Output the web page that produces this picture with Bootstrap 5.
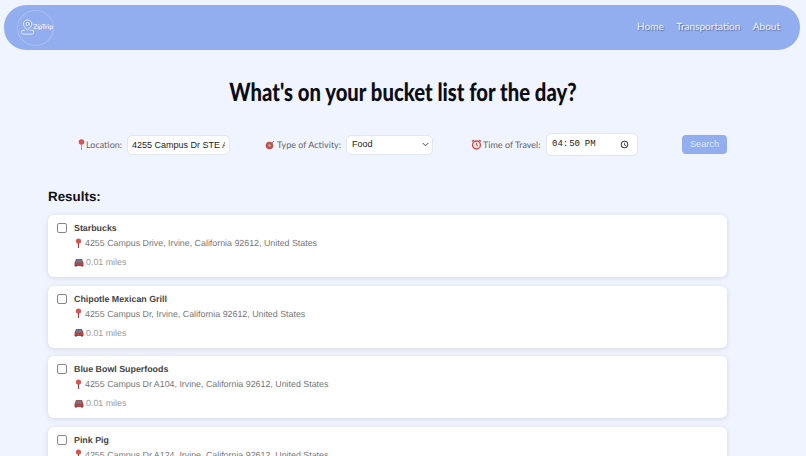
<!DOCTYPE html>
<html lang="en">
<head>
    <meta charset="UTF-8">
    <meta name="viewport" content="width=device-width,initial-scale=1">
    <title>ZipTrip</title>
    <link rel="stylesheet" href="https://cdn.jsdelivr.net/npm/bootstrap@5.3.3/dist/css/bootstrap.min.css">
    <style>
        html, body { height: 456px; overflow: hidden; }
        body { background: #f0f4ff; font-family: "Liberation Sans", Arial, sans-serif; text-rendering: geometricPrecision; }
        .hand { font-family: Lato, "Open Sans", sans-serif; }
        .top-bar { margin: 5px 6px 0 4px; height: 45px; background: #93aeee; border-radius: 22px; padding: 0 20px 0 13px; }
        .logo-ring { width: 37px; height: 36px; border-radius: 50%; border: 1px solid #a9bff2; padding-left: 3px; }
        .logo-name { font-size: 6.6px; font-weight: 700; color: #e6edfd; margin-left: -1px; }
        .top-links { gap: 12.5px; }
        .top-links a { color: #eef2fd; font-size: 10px; text-decoration: none; text-shadow: 1px 1px 1px #5a6f9e; }
        .page-title { font-size: 25px; font-weight: 900; color: #0c0c14; margin: 24px 0 0; line-height: 36px; transform: scaleX(.81); }
        .search-row { margin: 22.5px 79px 0 78px; height: 24px; }
        .search-group { gap: 5px; }
        .group-place { width: 151px; margin-right: 36px; }
        .group-kind { width: 168px; margin-right: 38px; }
        .group-time { width: 167px; margin-right: 44px; }
        .search-label { font-size: 9px; color: #666; white-space: nowrap; gap: 1px; }
        .field-box { height: 20px; min-height: 20px; border: 1px solid #e2e6ef; border-radius: 5px; background-color: #fff; font-size: 9px; color: #222; padding: 0 4px; box-shadow: none; }
        .field-place { width: 103px; flex: none; }
        .field-kind { width: 87px; flex: none; padding: 0 20px 0 5px; background-position: right 2px center; background-size: 9px 7px; }
        .field-time { width: 92px; flex: none; height: 23px; font-family: "Liberation Mono", monospace; padding: 0 5px; }
        .find-btn { width: 45px; height: 19px; background: #93aeee; border: 0; border-radius: 4px; color: #dfe7fb; font-size: 9.2px; padding: 0; }
        .results-wrap { margin: 31.5px 79px 0 48px; }
        .results-title { font-size: 13.4px; font-weight: 700; color: #111; margin: 0 0 10px; line-height: 17px; }
        .place-card { height: 62px; margin-bottom: 8.5px; background: #fff; border: 0; border-radius: 6px; box-shadow: 0 1px 5px rgba(60, 70, 100, .16); padding: 7px 10px 0 9px; }
        .place-tick { width: 10px; height: 10px; margin: 1px 7px 0 0; border: 1px solid #888; border-radius: 2px; flex: none; }
        .place-name { font-size: 8.85px; font-weight: 700; color: #444; line-height: 12px; }
        .place-addr { font-size: 8.85px; color: #777; margin-top: 3px; line-height: 12px; gap: 2px; }
        .place-dist { font-size: 8.85px; color: #999; margin-top: 7px; line-height: 12px; gap: 2px; }
    </style>
</head>
<body>
<nav class="top-bar d-flex align-items-center justify-content-between">
    <div class="logo-ring d-flex align-items-center">
        <svg width="14" height="17" viewBox="0 0 14 17" fill="none" stroke="#e6edfd" stroke-width="1">
            <path d="M7 11.500C4.500 8.500 2.500 7 2.500 4.800a4.500 4.300 0 0 1 9 0C11.500 7 9.500 8.500 7 11.500z"/>
            <circle cx="7" cy="4.800" r="1.600"/>
            <path d="M4 11.500H2.500a1.500 1.500 0 0 0 0 4h9a1.500 1.500 0 0 0 0-4H10"/>
        </svg>
        <span class="logo-name hand">ZipTrip</span>
    </div>
    <div class="top-links d-flex hand">
        <a href="#">Home</a>
        <a href="#">Transportation</a>
        <a href="#">About</a>
    </div>
</nav>

<h1 class="page-title text-center hand">What's on your bucket list for the day?</h1>

<form class="search-row d-flex align-items-center">
    <div class="search-group group-place d-flex align-items-center justify-content-between">
        <span class="search-label hand d-flex align-items-center">
            <svg width="7" height="11" viewBox="0 0 7 11"><circle cx="3.500" cy="3" r="2.800" fill="#d9534f"/><path d="M3.500 5v6" stroke="#999" stroke-width="1"/></svg>
            Location:
        </span>
        <input class="field-box field-place form-control" value="4255 Campus Dr STE A">
    </div>
    <div class="search-group group-kind d-flex align-items-center justify-content-between">
        <span class="search-label hand d-flex align-items-center">
            <svg width="11" height="10" viewBox="0 0 11 10"><circle cx="4.500" cy="5.500" r="3.800" fill="#c0504d"/><circle cx="4.500" cy="5.500" r="1.300" fill="#e8a09a"/><path d="M5 5l4-4" stroke="#777" stroke-width="1"/></svg>
            Type of Activity:
        </span>
        <select class="field-box field-kind form-select"><option>Food</option></select>
    </div>
    <div class="search-group group-time d-flex align-items-center justify-content-between">
        <span class="search-label hand d-flex align-items-center">
            <svg width="11" height="11" viewBox="0 0 11 11"><circle cx="5.500" cy="6" r="4" fill="#f4dcd8" stroke="#c0504d" stroke-width="1.300"/><path d="M5.500 3.800V6l1.500 1" stroke="#555" stroke-width=".8" fill="none"/><path d="M1 2.500L3 1M10 2.500L8 1" stroke="#c0504d" stroke-width="1.300"/></svg>
            Time of Travel:
        </span>
        <input type="time" class="field-box field-time form-control" value="16:50">
    </div>
    <button type="button" class="find-btn btn">Search</button>
</form>

<section class="results-wrap">
    <h2 class="results-title">Results:</h2>

    <div class="place-card card d-flex flex-row">
        <span class="place-tick"></span>
        <div>
            <div class="place-name">Starbucks</div>
            <div class="place-addr d-flex align-items-center">
                <svg width="9" height="11" viewBox="0 0 9 11"><circle cx="4.500" cy="3" r="2.600" fill="#d9534f"/><path d="M4.500 5v5" stroke="#a33" stroke-width="1"/></svg>
                4255 Campus Drive, Irvine, California 92612, United States
            </div>
            <div class="place-dist d-flex align-items-center">
                <svg width="10" height="9" viewBox="0 0 10 9"><path d="M.5 5l1.500-4h6l1.500 4v3H.5z" fill="#b5443f"/><path d="M2.800 1.800h4.400l.9 2.700H1.900z" fill="#5f7f9f"/><path d="M1 8h2M7 8h2" stroke="#444" stroke-width="1"/></svg>
                0.01 miles
            </div>
        </div>
    </div>

    <div class="place-card card d-flex flex-row">
        <span class="place-tick"></span>
        <div>
            <div class="place-name">Chipotle Mexican Grill</div>
            <div class="place-addr d-flex align-items-center">
                <svg width="9" height="11" viewBox="0 0 9 11"><circle cx="4.500" cy="3" r="2.600" fill="#d9534f"/><path d="M4.500 5v5" stroke="#a33" stroke-width="1"/></svg>
                4255 Campus Dr, Irvine, California 92612, United States
            </div>
            <div class="place-dist d-flex align-items-center">
                <svg width="10" height="9" viewBox="0 0 10 9"><path d="M.5 5l1.500-4h6l1.500 4v3H.5z" fill="#b5443f"/><path d="M2.800 1.800h4.400l.9 2.700H1.900z" fill="#5f7f9f"/><path d="M1 8h2M7 8h2" stroke="#444" stroke-width="1"/></svg>
                0.01 miles
            </div>
        </div>
    </div>

    <div class="place-card card d-flex flex-row">
        <span class="place-tick"></span>
        <div>
            <div class="place-name">Blue Bowl Superfoods</div>
            <div class="place-addr d-flex align-items-center">
                <svg width="9" height="11" viewBox="0 0 9 11"><circle cx="4.500" cy="3" r="2.600" fill="#d9534f"/><path d="M4.500 5v5" stroke="#a33" stroke-width="1"/></svg>
                4255 Campus Dr A104, Irvine, California 92612, United States
            </div>
            <div class="place-dist d-flex align-items-center">
                <svg width="10" height="9" viewBox="0 0 10 9"><path d="M.5 5l1.500-4h6l1.500 4v3H.5z" fill="#b5443f"/><path d="M2.800 1.800h4.400l.9 2.700H1.900z" fill="#5f7f9f"/><path d="M1 8h2M7 8h2" stroke="#444" stroke-width="1"/></svg>
                0.01 miles
            </div>
        </div>
    </div>

    <div class="place-card card d-flex flex-row">
        <span class="place-tick"></span>
        <div>
            <div class="place-name">Pink Pig</div>
            <div class="place-addr d-flex align-items-center">
                <svg width="9" height="11" viewBox="0 0 9 11"><circle cx="4.500" cy="3" r="2.600" fill="#d9534f"/><path d="M4.500 5v5" stroke="#a33" stroke-width="1"/></svg>
                4255 Campus Dr A124, Irvine, California 92612, United States
            </div>
        </div>
    </div>
</section>
<script src="https://cdn.jsdelivr.net/npm/bootstrap@5.3.3/dist/js/bootstrap.bundle.min.js"></script>
</body>
</html>
